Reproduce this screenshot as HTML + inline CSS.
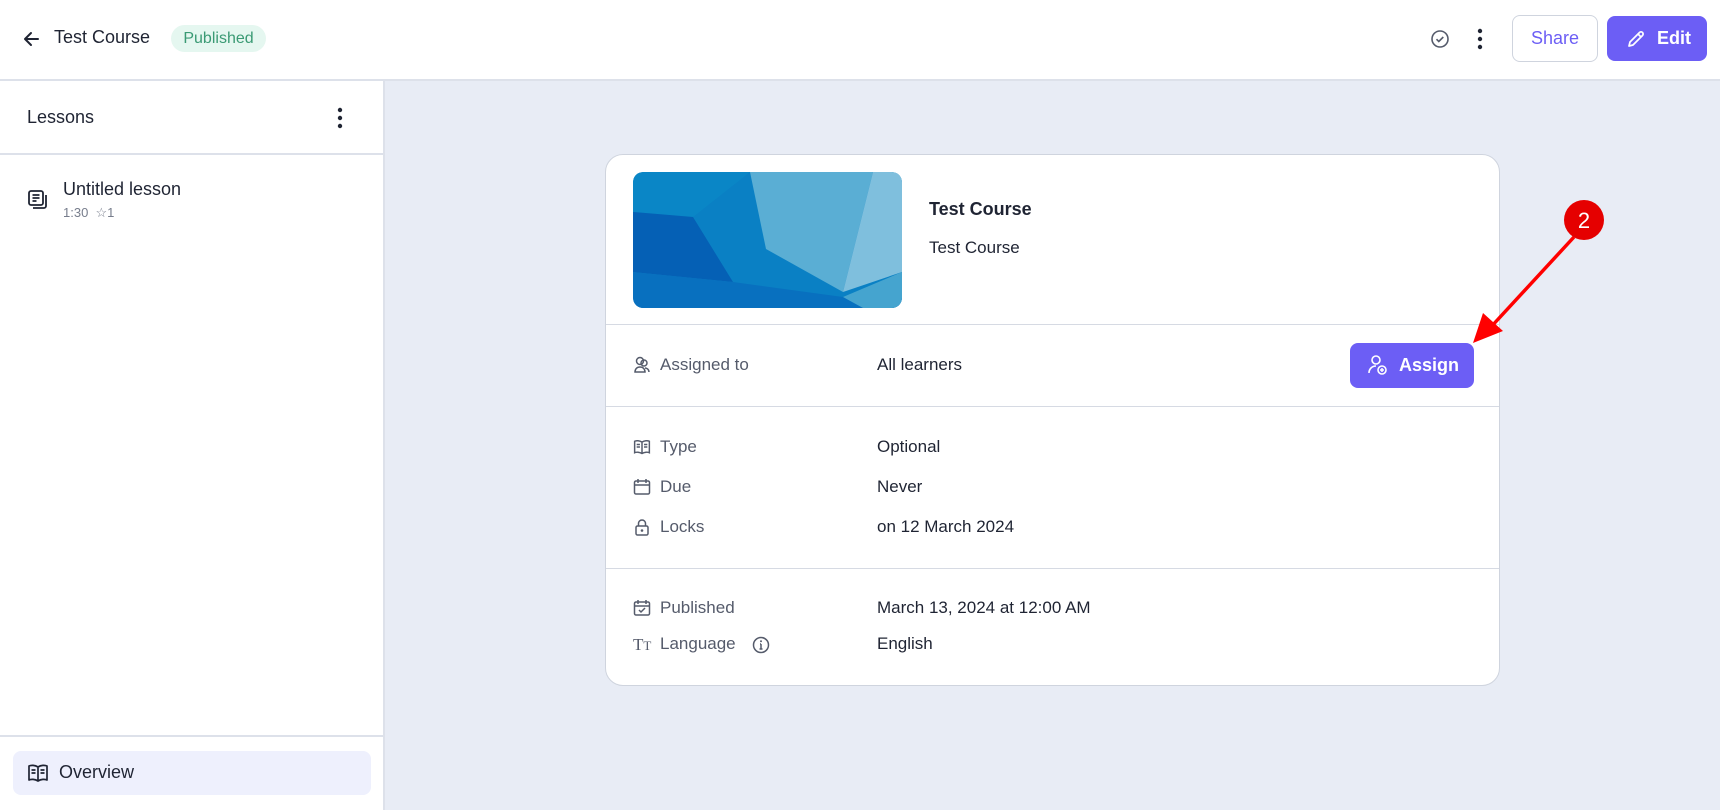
<!DOCTYPE html>
<html><head><meta charset="utf-8"><style>
*{box-sizing:border-box;margin:0;padding:0}
body{width:1720px;height:810px;overflow:hidden;background:#e8ecf5;font-family:"Liberation Sans",sans-serif;color:#1f2433;position:relative}
.abs{position:absolute}
.hdr{left:0;top:0;width:1720px;height:81px;background:#fff;border-bottom:2px solid #dde1ea}
.side{left:0;top:81px;width:385px;height:729px;background:#fff;border-right:2px solid #dde1ea}
.card{left:605px;top:154px;width:895px;height:532px;background:#fff;border:1px solid #cfd4de;border-radius:18px}
.hr{height:1px;background:#d6dae3}
.lbl{font-size:17px;color:#555b6b}
.val{font-size:17px;color:#1f2433}
</style></head><body>
<div class="abs hdr"></div>
<svg class="abs" style="left:22px;top:29px" width="20" height="20" viewBox="0 0 20 20"><path d="M16 10H4M9 4l-6 6 6 6" fill="none" stroke="#1f2433" stroke-width="2" stroke-linecap="round" stroke-linejoin="round"/></svg>
<div class="abs" style="left:54px;top:27px;font-size:18px;color:#1f2433">Test Course</div>
<div class="abs" style="left:171px;top:25px;width:95px;height:27px;border-radius:14px;background:#e5f7f0;color:#3a9a74;font-size:16px;line-height:27px;text-align:center">Published</div>
<svg class="abs" style="left:1430px;top:29px" width="20" height="20" viewBox="0 0 20 20"><circle cx="10" cy="10" r="8" fill="none" stroke="#555b6b" stroke-width="1.6"/><path d="M6.5 10.2l2.3 2.3 4.5-4.5" fill="none" stroke="#555b6b" stroke-width="1.6"/></svg>
<svg class="abs" style="left:1476px;top:28px" width="8" height="22"><circle cx="4" cy="3" r="2.2" fill="#1f2433"/><circle cx="4" cy="11" r="2.2" fill="#1f2433"/><circle cx="4" cy="19" r="2.2" fill="#1f2433"/></svg>
<div class="abs" style="left:1512px;top:15px;width:86px;height:47px;border:1px solid #cfd4de;border-radius:8px;color:#6c5ef5;font-size:18px;line-height:45px;text-align:center">Share</div>
<div class="abs" style="left:1607px;top:16px;width:100px;height:45px;background:#6c5ef5;border-radius:8px;color:#fff;font-size:18px;font-weight:bold;line-height:45px;padding-left:50px">Edit</div>
<svg class="abs" style="left:1626px;top:29px" width="20" height="20" viewBox="0 0 20 20"><path d="M3 17l1-4L13.5 3.5a2 2 0 013 3L7 16z M12 5l3 3" fill="none" stroke="#fff" stroke-width="1.7" stroke-linejoin="round"/></svg>

<div class="abs side"></div>
<div class="abs" style="left:27px;top:107px;font-size:18px">Lessons</div>
<svg class="abs" style="left:336px;top:107px" width="8" height="22"><circle cx="4" cy="3" r="2.2" fill="#1f2433"/><circle cx="4" cy="11" r="2.2" fill="#1f2433"/><circle cx="4" cy="19" r="2.2" fill="#1f2433"/></svg>
<div class="abs hr" style="left:0;top:153px;width:385px;height:2px;background:#dde1ea"></div>
<svg class="abs" style="left:27px;top:189px" width="22" height="22" viewBox="0 0 22 22"><rect x="2" y="2" width="14" height="14" rx="2" fill="none" stroke="#1f2433" stroke-width="1.8"/><path d="M5.5 6h7M5.5 9h7M5.5 12h4M19 6v11a2 2 0 01-2 2H6" fill="none" stroke="#1f2433" stroke-width="1.8"/></svg>
<div class="abs" style="left:63px;top:179px;font-size:18px">Untitled lesson</div>
<div class="abs" style="left:63px;top:205px;font-size:13px;color:#777d8c">1:30 &nbsp;☆1</div>
<div class="abs hr" style="left:0;top:735px;width:385px;height:2px;background:#dde1ea"></div>
<div class="abs" style="left:13px;top:751px;width:358px;height:44px;background:#eef0fd;border-radius:8px"></div>
<svg class="abs" style="left:27px;top:763px" width="22" height="20" viewBox="0 0 22 20"><path d="M11 4v14M11 4C8 2 4 2 2 3v14c2-1 6-1 9 1 3-2 7-2 9-1V3c-2-1-6-1-9 1z M4.5 7h4M4.5 10h4M13.5 7h4M13.5 10h4" fill="none" stroke="#1f2433" stroke-width="1.7" stroke-linejoin="round"/></svg>
<div class="abs" style="left:59px;top:762px;font-size:18px">Overview</div>

<div class="abs card"></div>
<svg class="abs" style="left:633px;top:172px;border-radius:10px" width="269" height="136" viewBox="0 0 269 136">
<defs><clipPath id="c"><rect width="269" height="136" rx="10"/></clipPath></defs>
<g clip-path="url(#c)">
<rect width="269" height="136" fill="#0a80c4"/>
<polygon points="0,0 117,0 60,45 0,40" fill="#0a86c6"/>
<polygon points="117,0 240,0 210,120 133,77" fill="#5aaed4"/>
<polygon points="240,0 269,0 269,100 210,120" fill="#7fbfdd"/>
<polygon points="0,40 60,45 100,110 0,100" fill="#0560b5"/>
<polygon points="0,100 100,110 210,125 269,110 269,136 0,136" fill="#0870bf"/>
<polygon points="210,125 269,100 269,136 230,136" fill="#45a4cf"/>
</g></svg>
<div class="abs" style="left:929px;top:199px;font-size:18px;font-weight:bold">Test Course</div>
<div class="abs" style="left:929px;top:238px;font-size:17px">Test Course</div>
<div class="abs hr" style="left:606px;top:324px;width:893px"></div>
<svg class="abs" style="left:633px;top:356px" width="18" height="18" viewBox="0 0 18 18"><circle cx="7" cy="5" r="3.5" fill="none" stroke="#555b6b" stroke-width="1.5"/><circle cx="11" cy="7" r="3" fill="none" stroke="#555b6b" stroke-width="1.5"/><path d="M2 16c0-3 2-5 5-5s5 2 5 5zM12 12c2 0 4 1.5 4 4" fill="none" stroke="#555b6b" stroke-width="1.5"/></svg>
<div class="abs lbl" style="left:660px;top:355px">Assigned to</div>
<div class="abs val" style="left:877px;top:355px">All learners</div>
<div class="abs" style="left:1350px;top:343px;width:124px;height:45px;background:#6c5ef5;border-radius:8px;color:#fff;font-size:18px;font-weight:bold;line-height:45px;padding-left:49px">Assign</div>
<svg class="abs" style="left:1367px;top:354px" width="22" height="22" viewBox="0 0 22 22"><circle cx="9" cy="6" r="4" fill="none" stroke="#fff" stroke-width="1.6"/><path d="M2 19c0-4 3-7 7-7" fill="none" stroke="#fff" stroke-width="1.6"/><circle cx="15" cy="16" r="4" fill="none" stroke="#fff" stroke-width="1.6"/><path d="M15 14v4M13 16h4" stroke="#fff" stroke-width="1.5"/></svg>
<div class="abs hr" style="left:606px;top:406px;width:893px"></div>
<svg class="abs" style="left:633px;top:438px" width="18" height="18" viewBox="0 0 22 20"><path d="M11 4v14M11 4C8 2 4 2 2 3v14c2-1 6-1 9 1 3-2 7-2 9-1V3c-2-1-6-1-9 1z M4.5 7h4M4.5 10h4M13.5 7h4M13.5 10h4" fill="none" stroke="#555b6b" stroke-width="1.8"/></svg>
<div class="abs lbl" style="left:660px;top:437px">Type</div>
<div class="abs val" style="left:877px;top:437px">Optional</div>
<svg class="abs" style="left:633px;top:478px" width="18" height="18" viewBox="0 0 18 18"><rect x="1.5" y="3" width="15" height="13" rx="1.5" fill="none" stroke="#555b6b" stroke-width="1.5"/><path d="M1.5 7h15M5 1v4M13 1v4" stroke="#555b6b" stroke-width="1.5"/></svg>
<div class="abs lbl" style="left:660px;top:477px">Due</div>
<div class="abs val" style="left:877px;top:477px">Never</div>
<svg class="abs" style="left:633px;top:518px" width="18" height="18" viewBox="0 0 18 18"><rect x="3" y="8" width="12" height="9" rx="1.5" fill="none" stroke="#555b6b" stroke-width="1.5"/><path d="M5.5 8V5.5a3.5 3.5 0 017 0V8" fill="none" stroke="#555b6b" stroke-width="1.5"/><circle cx="9" cy="12.5" r="1.3" fill="#555b6b"/></svg>
<div class="abs lbl" style="left:660px;top:517px">Locks</div>
<div class="abs val" style="left:877px;top:517px">on 12 March 2024</div>
<div class="abs hr" style="left:606px;top:568px;width:893px"></div>
<svg class="abs" style="left:633px;top:599px" width="18" height="18" viewBox="0 0 18 18"><rect x="1.5" y="3" width="15" height="13" rx="1.5" fill="none" stroke="#555b6b" stroke-width="1.5"/><path d="M1.5 7h15M5 1v4M13 1v4M6 11l2 2 4-4" fill="none" stroke="#555b6b" stroke-width="1.5"/></svg>
<div class="abs lbl" style="left:660px;top:598px">Published</div>
<div class="abs val" style="left:877px;top:598px">March 13, 2024 at 12:00 AM</div>
<div class="abs" style="left:633px;top:635px;font-size:17px;color:#555b6b;font-family:'Liberation Serif',serif">T<span style="font-size:13px">T</span></div>
<div class="abs lbl" style="left:660px;top:634px">Language</div>
<svg class="abs" style="left:752px;top:636px" width="18" height="18" viewBox="0 0 18 18"><circle cx="9" cy="9" r="7.5" fill="none" stroke="#555b6b" stroke-width="1.5"/><path d="M9 8v5M7.5 13h3M8 8h1" stroke="#555b6b" stroke-width="1.5"/><circle cx="9" cy="5.3" r="1" fill="#555b6b"/></svg>
<div class="abs val" style="left:877px;top:634px">English</div>

<svg class="abs" style="left:0;top:0" width="1720" height="810">
<line x1="1574" y1="237" x2="1490" y2="328" stroke="#f00" stroke-width="3.5"/>
<polygon points="1473,343 1483,313 1503,331" fill="#f00"/>
<circle cx="1584" cy="220" r="20" fill="#e50000"/>
<text x="1584" y="228" text-anchor="middle" fill="#fff" font-size="22" font-family="Liberation Sans,sans-serif">2</text>
</svg>
</body></html>
